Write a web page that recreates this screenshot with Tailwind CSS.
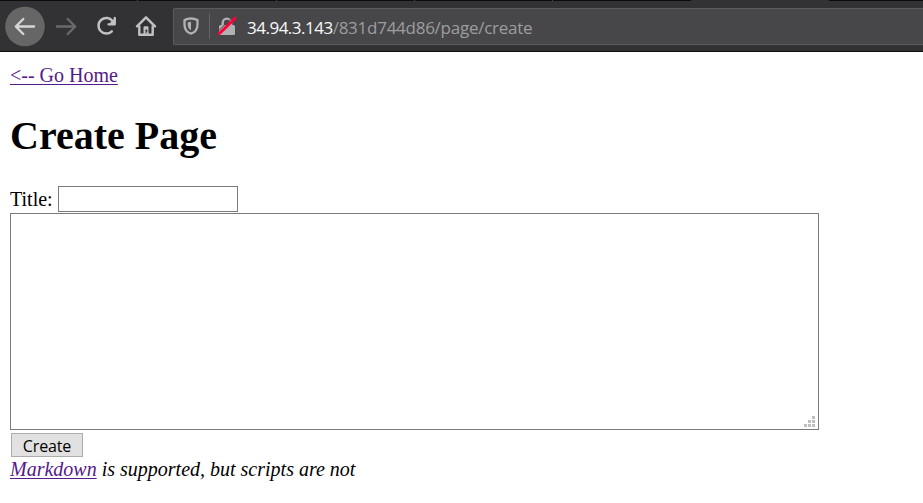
<!DOCTYPE html>
<html lang="en">
<head>
<meta charset="utf-8">
<title>Create Page</title>
<script src="https://cdn.jsdelivr.net/npm/@tailwindcss/browser@4"></script>
</head>
<body class="bg-white text-black w-[923px] h-[503px] overflow-hidden">
<header class="h-[52px] bg-[#323234] border-b border-[#0c0c0d] flex flex-col">
  <!-- bottom edge of the tab strip -->
  <div class="h-px flex shrink-0 bg-[#0c0c0d]">
    <i class="w-[138px] border-r border-[#4a4a4c]"></i><i class="w-[139px] border-r border-[#4a4a4c]"></i><i class="w-[138px] border-r border-[#4a4a4c]"></i><i class="w-[138px] border-r border-[#4a4a4c]"></i><i class="w-[138px]"></i><i class="w-[138px] bg-[#323234]"></i>
  </div>
  <div class="flex h-[50px] pl-[5px] pt-[5px]">
    <svg class="size-[41px] shrink-0" viewBox="0 0 41 41" fill="none"><circle cx="20" cy="20.5" r="20.2" fill="#666667" stroke="#29292a" stroke-width=".6"/><path d="M29 20.5H11.5M18.3 13L10.8 20.5L18.3 28" stroke="#d6d6d7" stroke-width="2.4" stroke-linecap="round" stroke-linejoin="round"/></svg>
    <svg class="w-[40px] h-[41px] shrink-0" viewBox="46 6 40 41" fill="none"><path d="M57 26.5H74.5M67.7 19L75.2 26.5L67.7 34" stroke="#69696b" stroke-width="2.4" stroke-linecap="round" stroke-linejoin="round"/></svg>
    <svg class="w-[40px] h-[41px] shrink-0" viewBox="86 6 40 41" fill="none"><path d="M112.5 21A7.8 7.8 0 1 0 111.8 31.3" stroke="#c1c1c2" stroke-width="2.5" stroke-linecap="round"/><path d="M114.8 18V24.3H108.5" stroke="#c1c1c2" stroke-width="2.3" stroke-linecap="round" stroke-linejoin="round"/><path d="M115 18V24.5H108.5Z" fill="#c1c1c2"/></svg>
    <svg class="w-[40px] h-[41px] shrink-0" viewBox="126 6 40 41" fill="none"><path d="M137 26.3L146 17.3L155 26.3" stroke="#c1c1c2" stroke-width="2.4" stroke-linecap="round" stroke-linejoin="round"/><path d="M139.3 25.5V34.7H152.7V25.5" stroke="#c1c1c2" stroke-width="2.4" stroke-linejoin="round"/><path d="M143.5 34.5V27.3Q143.5 26.3 144.5 26.3H147.5Q148.5 26.3 148.5 27.3V34.5H146.5V31.8H147.3V29.5H145.5V34.5Z" fill="#c1c1c2"/></svg>
    <div class="ml-[7px] mt-[2px] h-[37px] flex-1 border border-r-0 border-[#5b5b5d] bg-[#474749] rounded-l-[2px] flex items-center">
      <svg class="w-[72px] h-[35px] shrink-0" viewBox="174 9 72 35" fill="none">
        <path d="M191 18.5C193.3 18.5 195.5 19.1 197.5 20.1V24.5C197.5 29 195 32.4 191 33.7C187 32.4 184.5 29 184.5 24.5V20.1C186.5 19.1 188.7 18.5 191 18.5Z" stroke="#b1b1b3" stroke-width="2.3" stroke-linejoin="round"/>
        <path d="M191 21.7V30.2C188.9 29.2 187.7 27.3 187.7 24.6V22.4C188.7 21.9 189.8 21.7 191 21.7Z" fill="#b1b1b3"/>
        <path d="M209.5 13V39" stroke="#656569"/>
        <path d="M222.7 26V22.8A4.2 4.2 0 0 1 231.1 22.8V26" stroke="#b1b1b3" stroke-width="2.4"/>
        <rect x="219" y="25" width="16" height="10" rx="1.5" fill="#b1b1b3"/>
        <path d="M217.3 32.1L233.3 16.3" stroke="#474749" stroke-width="1"/>
        <path d="M219.2 33.8L235 18.4" stroke="#ff0039" stroke-width="2.9" stroke-linecap="round"/>
      </svg>
      <span class="ml-px mt-[2px] whitespace-nowrap font-['Open_Sans','Noto_Sans',sans-serif] text-[17px] leading-[24px] tracking-[-0.26px] text-[#9d9da0]"><span class="tracking-[-0.5px] text-[#f9f9fa]">34.94.3.143</span>/831d744d86/page/create</span>
    </div>
  </div>
</header>
<main class="px-[10px] pt-[12px] font-['Liberation_Serif',serif] text-[20px] leading-[23px]">
  <a class="block w-fit text-[#551a8b] underline decoration-1 underline-offset-2">&lt;-- Go Home</a>
  <h1 class="mt-[26px] text-[40px] leading-[46px] font-bold">Create Page</h1>
  <form class="mt-[27px]">
    <div class="flex h-[27px]">
      <label for="title" class="mt-[2px] w-[48px]">Title:</label>
      <input id="title" class="w-[180px] h-[26px] border border-[#7a7a7a] bg-white outline-none">
    </div>
    <div class="relative w-[809px] h-[217px]">
      <textarea class="block size-full resize-none border border-[#7a7a7a] bg-white outline-none"></textarea>
      <svg class="absolute right-[4px] bottom-[3px] w-[11px] h-[11px]" viewBox="0 0 11 11" fill="#bfbfbf"><path d="M8 0h3v3h-3zM4 4h3v3h-3zM8 4h3v3h-3zM0 8h3v3h-3zM4 8h3v3h-3zM8 8h3v3h-3z"/></svg>
    </div>
    <button type="button" class="block mt-[3px] ml-px w-[72px] h-[24px] pt-px border border-[#adadad] bg-[#e1e1e1] font-['Open_Sans','Noto_Sans',sans-serif] text-[16px] leading-[22px] tracking-[-0.15px]">Create</button>
  </form>
  <p class="mt-px italic"><a class="text-[#551a8b] underline decoration-1 underline-offset-2">Markdown</a> is supported, but scripts are not</p>
</main>
</body>
</html>
